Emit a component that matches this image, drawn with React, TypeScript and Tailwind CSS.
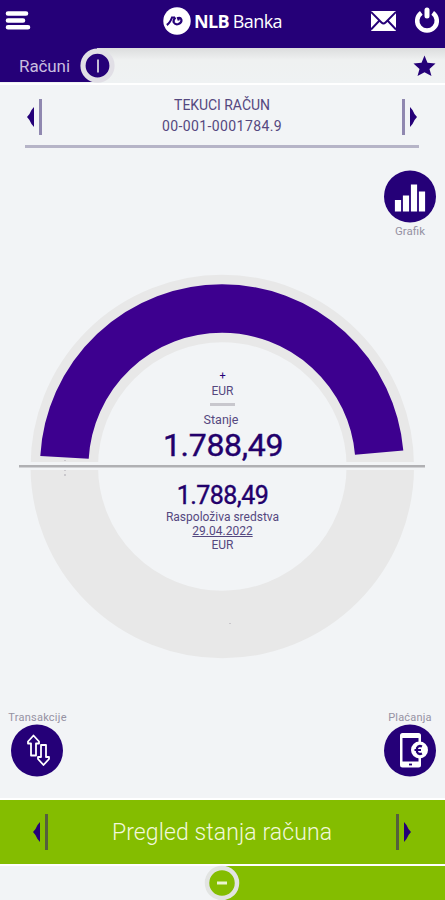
type Dir = 'left' | 'right';

function Arrow({ dir, bar, fill }: { dir: Dir; bar: string; fill: string }) {
  return (
    <button
      aria-label={dir}
      className={'flex h-9 w-[15px] items-center justify-between ' + (dir === 'right' ? 'rotate-180' : '')}
    >
      <svg className="h-5 w-2" viewBox="0 0 8 20">
        <path d="M7 0V20L4.500 17Q3 13 0 10Q3 7 4.500 3Z" fill={fill} />
      </svg>
      <span className={'h-9 w-[3px] ' + bar} />
    </button>
  );
}

function Header() {
  return (
    <header className="flex h-12 shrink-0 items-start bg-[#250078] text-white">
      <svg className="mt-[10px] ml-[5px] h-5 w-[26px] shrink-0" viewBox="0 0 26 20" stroke="white" strokeWidth="4.600" strokeLinecap="round">
        <path d="M3 3.500H21M3 10.500H18M3 17.300H23" />
      </svg>
      <div className="ml-[132px] flex h-[42px] w-[122px] shrink-0 items-center">
        <svg className="h-7 w-7 shrink-0" viewBox="0 0 28 28" fill="none" stroke="#250078">
          <circle cx="14" cy="14" r="13.700" fill="white" stroke="none" />
          <path d="M3.800 18Q7 16 9 10.500H12" strokeWidth="2.100" />
          <path d="M12.500 10.500Q9.800 13 10.800 15.500Q12.500 18 15.500 17Q19.200 15.500 18.300 12.300Q17.500 10.300 15 11L15.800 13.500" strokeWidth="2.200" />
        </svg>
        <span className="ml-[3px] font-['Open_Sans','Noto_Sans',sans-serif] text-[18px] leading-6 font-bold tracking-[-0.7px]">NLB</span>
        <span className="ml-[4px] font-['Open_Sans','Noto_Sans',sans-serif] text-[18px] leading-6 font-medium tracking-[-0.6px]">Banka</span>
      </div>
      <svg className="mt-[11px] ml-[86px] h-5 w-[25px] shrink-0" viewBox="0 0 25 20">
        <rect width="25" height="20" rx="1" fill="white" />
        <path d="M0 1L10.500 11.500Q12.500 13.500 14.500 11.500L25 1M0 18.500L8.500 9.500M25 18.500L16.500 9.500" fill="none" stroke="#250078" strokeWidth="1.900" />
      </svg>
      <svg className="mt-[7px] ml-[18px] h-[27px] w-[26px] shrink-0" viewBox="0 0 26 27" fill="none" stroke="white">
        <path d="M7.300 5.800A9.800 9.800 0 1 0 18.700 5.800" strokeWidth="4.500" />
        <path d="M13 3V9" strokeWidth="5" strokeLinecap="round" />
      </svg>
    </header>
  );
}

function SectionBar() {
  return (
    <div className="flex h-[37px] shrink-0 items-start border-b-2 border-white bg-linear-to-b from-[#dcddde] via-[#eff1f1] via-35% to-[#eff2f3]">
      <div className="flex h-[34px] w-[97px] items-center bg-[#250078] pt-[3px] pl-[19px] text-[17px] tracking-[-0.1px] text-[#c9bddf]">
        Računi
      </div>
      <svg className="-mt-px -ml-[17px] h-9 w-[35px]" viewBox="0 0 35 36">
        <circle cx="17.500" cy="18.700" r="14.500" fill="#250078" stroke="#e1dfe6" strokeWidth="5.200" />
        <path d="M18 12.500V25.500" stroke="#e1dfe6" strokeWidth="1.700" />
      </svg>
      <svg className="mt-[7px] mr-[9px] ml-auto h-[22px] w-[23px]" viewBox="0 0 24 22">
        <path d="M12 0L15.100 7.500L23.500 8.400L17.200 14L19.300 21.500L12 17.600L4.700 21.500L6.800 14L.500 8.400L8.900 7.500Z" fill="#250078" />
      </svg>
    </div>
  );
}

function AccountPicker() {
  return (
    <div className="mr-[26px] ml-[25px] flex h-[63px] shrink-0 justify-between border-b-[3px] border-[#b6b4c7] pt-[9px] pr-[2px] pl-[2px]">
      <div className="mt-[5px]"><Arrow dir="left" bar="bg-[#9088b0]" fill="#250078" /></div>
      <div className="pt-px text-center text-[14px] leading-[21px] text-[#55487f]">
        <div className="tracking-[-0.05px]">TEKUCI RAČUN</div>
        <div className="tracking-[0.4px]">00-001-0001784.9</div>
      </div>
      <div className="mt-[5px]"><Arrow dir="right" bar="bg-[#9088b0]" fill="#250078" /></div>
    </div>
  );
}

function Gauge() {
  return (
    <svg className="absolute inset-0 h-full w-full" viewBox="0 242 445 480" fill="none">
      <clipPath id="halves">
        <path d="M0 242H445V462H0ZM0 470H445V722H0Z" />
      </clipPath>
      <circle cx="222.300" cy="466.500" r="158" stroke="#e8e8e8" strokeWidth="67.500" clipPath="url(#halves)" />
      <circle cx="222" cy="466.300" r="157.750" stroke="#3d008f" strokeWidth="48.500" pathLength="360" strokeDasharray="171.700 188.300" strokeDashoffset="-183.300" />
      <path d="M19 466.300H425" stroke="#b0b0b3" strokeWidth="2.600" />
      <path d="M65 460v1m0 9v1m0 3v2m164.500 147.500h1" stroke="#aaa7b0" strokeWidth="1" />
    </svg>
  );
}

function Balance() {
  return (
    <div className="relative h-[480px] shrink-0">
      <Gauge />
      <div className="relative flex flex-col items-center pt-[128px] text-[#55487f]">
        <div className="h-3 text-[11px] leading-3 text-[#250078]">+</div>
        <div className="mt-px h-4 text-[12px] leading-4">EUR</div>
        <div className="mt-[4px] h-[3px] w-[25px] bg-[#c8c7cd]" />
        <div className="mt-[6px] h-4 pr-[3px] text-[12.5px] leading-4">Stanje</div>
        <div className="mt-px h-8 pl-px text-[32px] leading-8 tracking-[-0.3px] text-[#22006b] [-webkit-text-stroke:0.4px_#22006b]">1.788,49</div>
        <div className="mt-[21px] h-7 text-[25px] leading-7 tracking-[-0.55px] text-[#22006b] [-webkit-text-stroke:0.4px_#22006b]">1.788,49</div>
        <div className="h-[14px] text-[12px] leading-[14px]">Raspoloživa sredstva</div>
        <div className="h-[14px] text-[12px] leading-[14px] underline">29.04.2022</div>
        <div className="h-[14px] text-[12px] leading-[14px]">EUR</div>
      </div>
    </div>
  );
}

export default function App() {
  return (
    <div className="flex h-[900px] w-[445px] flex-col overflow-hidden bg-[#f2f4f6] font-[Roboto,sans-serif]">
      <Header />
      <SectionBar />
      <AccountPicker />
      <div className="flex h-[94px] shrink-0 justify-end pt-[22px] pr-[9px]">
        <div className="flex w-[52px] flex-col items-center text-[11.5px] leading-[14px] text-[#9692a3]">
          <svg className="h-[53px] w-[52px]" viewBox="0 0 52 53">
            <circle cx="26" cy="26.500" r="26" fill="#250078" />
            <path d="M14 30V41.500M22 25.500V41.500M30 14.500V41.500M38 21.500V41.500" stroke="white" strokeWidth="6.200" />
          </svg>
          <span className="mt-px">Grafik</span>
        </div>
      </div>
      <Balance />
      <div className="-mt-[12px] flex h-[88px] shrink-0 justify-between pr-[9px] pl-[10px] text-[11px] leading-[16px] text-[#9692a3]">
        <div className="flex w-[54px] flex-col items-center whitespace-nowrap">
          <span className="h-[14px] pl-px tracking-[0.25px]">Transakcije</span>
          <svg className="h-[53px] w-[52px]" viewBox="0 0 52 53">
            <circle cx="26" cy="26.500" r="26" fill="#250078" />
            <path d="M22.500 11.500L17 17.500V19.500H20V31.500H25V19.500H28V17.500ZM32.500 41L27 35V33H30V21H35V33H38V35Z" fill="none" stroke="white" strokeWidth="1.800" strokeLinejoin="round" />
          </svg>
        </div>
        <div className="flex w-[52px] flex-col items-center whitespace-nowrap">
          <span className="h-[14px] tracking-[0.2px]">Plaćanja</span>
          <svg className="h-[53px] w-[52px]" viewBox="0 0 52 53">
            <circle cx="26" cy="26.500" r="26" fill="#250078" />
            <rect x="16" y="9" width="21" height="34.500" rx="2.500" fill="white" />
            <rect x="18.500" y="14" width="16" height="23.500" fill="#250078" />
            <path d="M25 40.500h3" stroke="#250078" strokeWidth="1.800" />
            <circle cx="35.500" cy="26" r="8.500" fill="white" />
            <path d="M38 22.500Q34.500 21 33 24V28Q34.500 31 38 29.500M30.500 26H37" fill="none" stroke="#250078" strokeWidth="2.200" />
          </svg>
        </div>
      </div>
      <div className="flex h-[68px] shrink-0 items-center justify-between border-y-2 border-white bg-[#84bd00] pr-[34px] pl-[33px]">
        <Arrow dir="left" bar="bg-[#55603d]" fill="#250078" />
        <div className="pt-[2px] text-[23px] font-light tracking-[0.1px] text-[#f1f8dc]">Pregled stanja računa</div>
        <Arrow dir="right" bar="bg-[#55603d]" fill="#250078" />
      </div>
      <div className="relative flex h-[34px] shrink-0 justify-end">
        <div className="w-[223px] bg-[#84bd00]" />
        <svg className="absolute -top-px left-[204px] h-9 w-9" viewBox="0 0 36 36">
          <circle cx="18" cy="18" r="15" fill="#84bd00" stroke="#e2e4e2" strokeWidth="4.500" />
          <path d="M13 18H23" stroke="#eaf5d0" strokeWidth="3" />
        </svg>
      </div>
    </div>
  );
}
